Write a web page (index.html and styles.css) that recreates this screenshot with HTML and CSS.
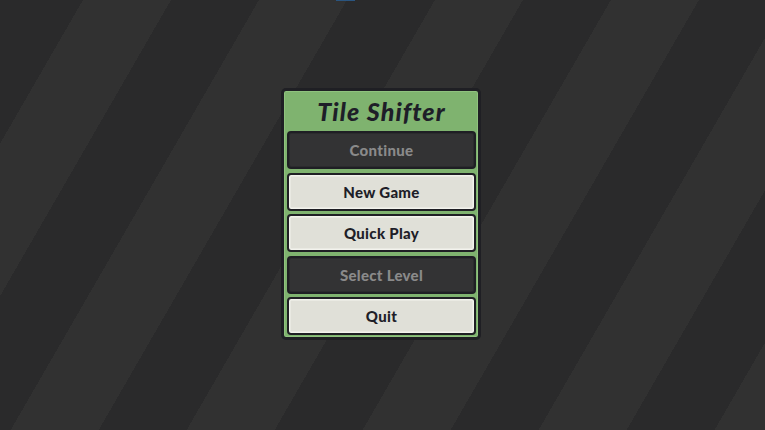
FILE: index.html
```html
<!DOCTYPE html>
<html lang="en">
<head>
<meta charset="utf-8">
<title>Tile Shifter</title>
<link rel="stylesheet" href="styles.css">
</head>
<body>
<div class="topmark"></div>
<main class="stage">
  <section class="menu">
    <h1 class="title">Tile Shifter</h1>
    <div class="buttons">
      <button class="btn btn-disabled">Continue</button>
      <button class="btn">New Game</button>
      <button class="btn">Quick Play</button>
      <button class="btn btn-disabled">Select Level</button>
      <button class="btn">Quit</button>
    </div>
  </section>
</main>
</body>
</html>
```
FILE: styles.css
```css
html, body {
  margin: 0;
  padding: 0;
  height: 100%;
}
body {
  background: repeating-linear-gradient(120deg,
    #2a2a2b 0px, #2a2a2b 71.85px,
    #313131 71.85px, #313131 148.05px,
    #2a2a2b 148.05px, #2a2a2b 152.4px);
  font-family: Lato, "Liberation Sans", sans-serif;
  overflow: hidden;
}
.topmark {
  position: absolute;
  left: 336px;
  top: 0;
  width: 19px;
  height: 1px;
  background: #2a5580;
}
.stage {
  height: 100%;
  display: flex;
  align-items: center;
  justify-content: center;
}
.menu {
  box-sizing: border-box;
  width: 200px;
  height: 252px;
  margin-left: -3px;
  margin-top: -2px;
  background: #7fb36f;
  border: 3px solid #1f1f24;
  border-radius: 5px;
  box-shadow: inset 0 0 0 1px #8fc27e;
  padding: 0 2px 2px 3px;
  display: flex;
  flex-direction: column;
}
.title {
  margin: 0;
  height: 40px;
  line-height: 40px;
  text-align: center;
  font-size: 25px;
  font-weight: 900;
  font-style: italic;
  color: #1e1e28;
  letter-spacing: 1.1px;
}
.buttons {
  display: flex;
  flex-direction: column;
  gap: 3.5px;
}
.btn {
  box-sizing: border-box;
  height: 38px;
  width: 100%;
  margin: 0;
  border: 2px solid #1f1f24;
  border-radius: 4px;
  background: #e0e0d8;
  box-shadow: inset 0 0 0 1.5px #f3f3ed;
  color: #1e1e28;
  font-family: Lato, "Liberation Sans", sans-serif;
  font-size: 15px;
  font-weight: 900;
  letter-spacing: 0.3px;
  padding: 0;
  line-height: 34px;
  text-align: center;
}
.btn-disabled {
  background: #333334;
  box-shadow: inset 0 0 0 1px #2b2b2d;
  color: #8a8a8a;
}
```
